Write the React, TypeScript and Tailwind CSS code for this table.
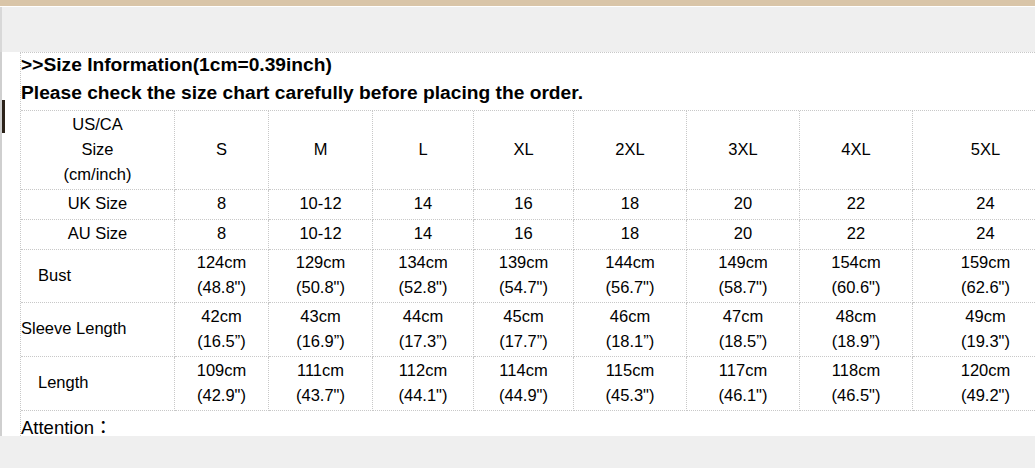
const sizes = ['S', 'M', 'L', 'XL', '2XL', '3XL', '4XL', '5XL'];
const uk = ['8', '10-12', '14', '16', '18', '20', '22', '24'];

const bust = [
  ['124cm', '(48.8")'], ['129cm', '(50.8")'], ['134cm', '(52.8")'], ['139cm', '(54.7")'],
  ['144cm', '(56.7")'], ['149cm', '(58.7")'], ['154cm', '(60.6")'], ['159cm', '(62.6")'],
];
const sleeve = [
  ['42cm', '(16.5\u201d)'], ['43cm', '(16.9\u201d)'], ['44cm', '(17.3\u201d)'], ['45cm', '(17.7\u201d)'],
  ['46cm', '(18.1\u201d)'], ['47cm', '(18.5\u201d)'], ['48cm', '(18.9\u201d)'], ['49cm', '(19.3")'],
];
const length = [
  ['109cm', '(42.9")'], ['111cm', '(43.7")'], ['112cm', '(44.1")'], ['114cm', '(44.9")'],
  ['115cm', '(45.3")'], ['117cm', '(46.1")'], ['118cm', '(46.5")'], ['120cm', '(49.2")'],
];

const cell = 'flex flex-col items-center justify-center text-center pb-[2px] border-r border-b border-dotted border-[#c8c8c8]';
const label = 'flex flex-col justify-center pb-[2px] border-r border-b border-dotted border-[#c8c8c8]';

function TwoLine({ rows }: { rows: string[][] }) {
  return (
    <>
      {rows.map(([cm, inch], i) => (
        <div key={i} className={cell}>
          <span>{cm}</span>
          <span>{inch}</span>
        </div>
      ))}
    </>
  );
}

export default function App() {
  return (
    <div className="w-[1035px] h-[468px] overflow-hidden bg-[#efefef] text-black font-['Liberation_Sans',Arial,sans-serif]">
      <div className="h-[6px] bg-[#d9c5a8]" />
      <div className="h-px bg-white" />
      <div className="h-[45px] bg-[#efefef] border-l-2 border-[#d8d8d8]" />

      <div className="relative h-[384px] bg-white border-l-2 border-[#cfcfcf] pl-[18px]">
        <div className="w-max border-l border-t border-dotted border-[#c8c8c8]">
          {/* heading */}
          <div className="h-[26px] leading-[24px] text-[19.2px] font-bold">&gt;&gt;Size Information(1cm=0.39inch)</div>
          <div className="h-[31px] leading-[28px] text-[19.2px] font-bold">
            Please check the size chart carefully before placing the order.
          </div>

          {/* size chart */}
          <div className="grid grid-cols-[154px_94px_104px_101px_100px_113px_113px_113px_146px] grid-rows-[79px_30px_30px_53px_54px_54px] border-t border-dotted border-[#c8c8c8] text-[16.5px] leading-[25px]">
            <div className={cell}>
              <span>US/CA</span>
              <span>Size</span>
              <span>(cm/inch)</span>
            </div>
            {sizes.map((s) => (
              <div key={s} className={cell}>{s}</div>
            ))}

            <div className={cell}>UK Size</div>
            {uk.map((v, i) => (
              <div key={i} className={cell}>{v}</div>
            ))}

            <div className={cell}>AU Size</div>
            {uk.map((v, i) => (
              <div key={i} className={cell}>{v}</div>
            ))}

            <div className={`${label} pl-[17px]`}>Bust</div>
            <TwoLine rows={bust} />

            <div className={label}>Sleeve Length</div>
            <TwoLine rows={sleeve} />

            <div className={`${label} pl-[17px]`}>Length</div>
            <TwoLine rows={length} />
          </div>

          <div className="h-[25px] leading-[33px] text-[18.5px] font-['Liberation_Sans','Noto_Sans_CJK_TC',sans-serif]">
            Attention：
          </div>
        </div>

        {/* bit of background image showing at the page edge */}
        <div className="absolute left-0 top-[48px] w-[3px] h-[33px] bg-[#2b2219]" />
      </div>

      <div className="h-[32px] bg-[#efefef]" />
    </div>
  );
}
